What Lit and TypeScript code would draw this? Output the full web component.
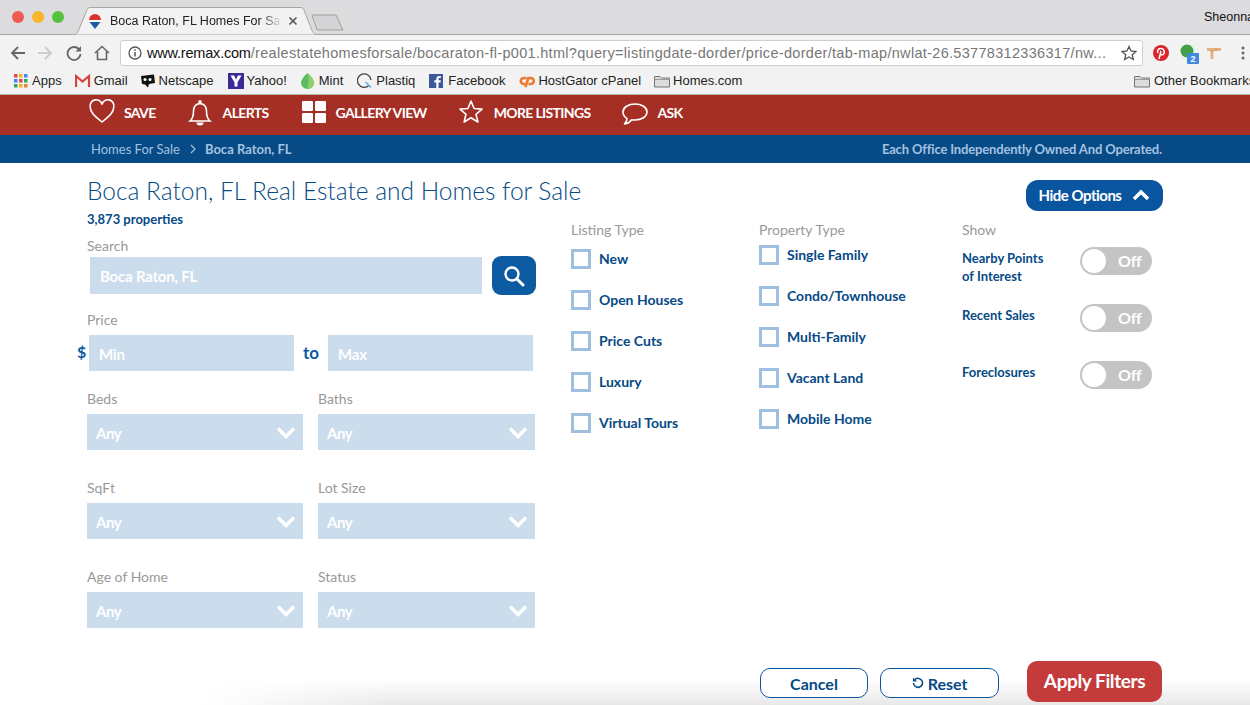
import { LitElement, css, html, svg } from 'lit';
import { customElement } from 'lit/decorators.js';

const bookmarkIcons = {
  apps: svg`<g>${[0, 5, 10].flatMap((y, r) => [0, 5, 10].map((x, c) => svg`<rect x=${x + 1} y=${y + 1} width="3.500" height="3.500" fill=${[['#e04a3f', '#f0b429', '#4285f4'], ['#4285f4', '#e04a3f', '#34a853'], ['#34a853', '#f0b429', '#e8862a']][r][c]}></rect>`))}</g>`,
  gmail: svg`<path d="M1 14V3l6.500 5.500L14 3v11" fill="none" stroke="#d5453b" stroke-width="2.200"></path>`,
  aol: svg`<path d="M1 3l13-1.500L15 10l-6 1-1 3.500L5 11.500 2 11z" fill="#111"></path><circle cx="5" cy="6.500" r="1.500" fill="#fff"></circle><circle cx="10" cy="6.500" r="1.500" fill="#fff"></circle>`,
  yahoo: svg`<rect width="16" height="16" fill="#3b2a96"></rect><path d="M2.500 2.500h3.600L8 6.500 9.900 2.500h3.600L9.500 9.500v4H6.500v-4z" fill="#fff"></path>`,
  mint: svg`<path d="M7.500 0C11.500 3.500 14 7 14 10a6.500 6 0 0 1-13 0C1 7 3.500 3.500 7.500 0z" fill="#5dbb63"></path><path d="M7.500 0C9 5 9 10 7.500 16 12.500 15.500 14 12.500 14 10 14 7 11.500 3.500 7.500 0z" fill="#8fd06a"></path>`,
  plastiq: svg`<path d="M12 12.500A6.800 6.800 0 1 1 14 7" fill="none" stroke="#444" stroke-width="1.300"></path><path d="M8.500 9l5.500 5.500" stroke="#55b7e0" stroke-width="1.600"></path>`,
  facebook: svg`<rect width="14" height="14" y="1" fill="#3b5998"></rect><path d="M9.500 15V9.500h2l.300-2.200H9.500V6c0-.700.200-1.100 1.100-1.100h1.200V3c-.300 0-.900-.100-1.700-.100-1.700 0-2.800 1-2.800 2.900v1.500H5.300v2.200h2V15z" fill="#fff"></path>`,
  cpanel: svg`<path d="M7.500 5H4.800a3 3 0 0 0 0 6H6" fill="none" stroke="#ee7a30" stroke-width="2.600"></path><path d="M6.500 14l2.800-9h2.500a3 3 0 0 1 0 6H9.500" fill="none" stroke="#ee7a30" stroke-width="2.600"></path>`,
  folder: svg`<path d="M.500 3.500h5.500l1.500 1.500h8v9h-15z" fill="#dcdcdc" stroke="#777"></path><path d="M.500 6.500h15" stroke="#999"></path>`,
};

const bookmarks = [
  { icon: 'apps', label: 'Apps', gap: 0 },
  { icon: 'gmail', label: 'Gmail', gap: 13 },
  { icon: 'aol', label: 'Netscape', gap: 12 },
  { icon: 'yahoo', label: 'Yahoo!', gap: 14 },
  { icon: 'mint', label: 'Mint', gap: 13 },
  { icon: 'plastiq', label: 'Plastiq', gap: 14 },
  { icon: 'facebook', label: 'Facebook', gap: 14 },
  { icon: 'cpanel', label: 'HostGator cPanel', gap: 14 },
  { icon: 'folder', label: 'Homes.com', gap: 13 },
] as const;

const navItems = [
  {
    label: 'SAVE', textGap: 9, after: 32, icon: svg`<path d="M13 22C5 15.500 1.200 12 1.200 7A5.800 5.800 0 0 1 13 4.500 5.800 5.800 0 0 1 24.800 7C24.800 12 21 15.500 13 22z" fill="none" stroke="#fff" stroke-width="1.600"></path>`,
  },
  {
    label: 'ALERTS', textGap: 9, after: 32, icon: svg`<path d="M2 21c2.500-2 3.500-4.500 3.500-10 0-4.500 2.500-7 6.500-7.500 4 .5 6.500 3 6.500 7.500 0 5.500 1 8 3.500 10z" fill="none" stroke="#fff" stroke-width="1.600"></path><circle cx="12" cy="1.800" r="1.800" fill="#fff"></circle><path d="M8.500 22.500a3.500 3 0 0 0 7 0z" fill="#fff"></path>`,
  },
  {
    label: 'GALLERY VIEW', textGap: 9, after: 31, icon: svg`<rect x="1" y="1" width="11" height="10" rx="1" fill="#fff"></rect><rect x="14" y="1" width="11" height="10" rx="1" fill="#fff"></rect><rect x="1" y="13" width="11" height="10" rx="1" fill="#fff"></rect><rect x="14" y="13" width="11" height="10" rx="1" fill="#fff"></rect>`,
  },
  {
    label: 'MORE LISTINGS', textGap: 10, after: 31, icon: svg`<path d="M13 1l3.100 7.500 7.900.600-6 5.200 1.900 7.700L13 17.800 6.100 22 8 14.300l-6-5.200 7.900-.600z" fill="none" stroke="#fff" stroke-width="1.600" stroke-linejoin="round"></path>`,
  },
  {
    label: 'ASK', textGap: 10, after: 0, icon: svg`<path d="M13 4c6.600 0 12 3.400 12 8s-5.400 8-12 8c-1.200 0-2.300-.100-3.400-.300C8 22 6 23.500 2.500 24c1.500-1.500 2.400-3 2.500-5.400C2.500 17 1 14.700 1 12c0-4.600 5.400-8 12-8z" fill="none" stroke="#fff" stroke-width="1.600" stroke-linejoin="round"></path>`,
  },
];

const selects = ['Beds', 'Baths', 'SqFt', 'Lot Size', 'Age of Home', 'Status'];
const listingTypes = ['New', 'Open Houses', 'Price Cuts', 'Luxury', 'Virtual Tours'];
const propertyTypes = ['Single Family', 'Condo/Townhouse', 'Multi-Family', 'Vacant Land', 'Mobile Home'];

@customElement('app-root')
export class AppRoot extends LitElement {
  static styles = css`
    :host {
      display: block;
      position: relative;
      width: 1250px;
      height: 705px;
      overflow: hidden;
      background: #fff;
      font-family: Lato, 'Liberation Sans', sans-serif;
    }
    svg { display: block; flex: none; }

    .tabstrip {
      display: flex;
      align-items: flex-start;
      height: 23px;
      padding: 11px 0 0 12px;
      background: #dcdbdd;
      border-bottom: 1px solid #a6a6a6;
      font-family: 'Liberation Sans', sans-serif;
    }
    .light { width: 12px; height: 12px; border-radius: 50%; margin-right: 8px; }
    .tab {
      position: relative;
      width: 244px;
      height: 28px;
      margin: -4px 0 0 0;
      flex: none;
      display: flex;
      align-items: center;
      padding-left: 16px;
      box-sizing: border-box;
    }
    .tab-shape { position: absolute; left: 0; top: 0; }
    .tab > :not(.tab-shape) { position: relative; }
    .tab-title {
      width: 172px;
      margin-left: 8px;
      font-size: 12.5px;
      white-space: nowrap;
      overflow: hidden;
      color: #222;
      -webkit-mask-image: linear-gradient(90deg, #000 88%, transparent);
      mask-image: linear-gradient(90deg, #000 88%, transparent);
    }
    .tab-x { margin: 0 0 0 6px; }
    .new-tab { margin: 3px 0 0 -5px; }
    .user { margin-left: auto; margin-top: -1px; font-size: 12.5px; color: #111; white-space: nowrap; width: 46px; overflow: hidden; }

    .toolbar {
      display: flex;
      align-items: center;
      height: 31px;
      box-sizing: border-box;
      padding: 4px 0 0 10px;
      background: #f2f2f2;
      font-family: 'Liberation Sans', sans-serif;
    }
    .tool { margin-right: 11px; }
    .omnibox {
      display: flex;
      align-items: center;
      width: 1023px;
      height: 26px;
      box-sizing: border-box;
      margin: 1px 0 0 0;
      background: #fff;
      border: 1px solid #cfcfcf;
      border-radius: 3px;
      padding-left: 7px;
      font-size: 14.5px;
      white-space: nowrap;
    }
    .url { margin-left: 5px; color: #777; width: 975px; overflow: hidden; letter-spacing: 0.31px; }
    .url b { font-weight: 400; color: #111; letter-spacing: -0.2px; }
    .exts { display: flex; align-items: center; margin-left: 9px; gap: 8px; }

    .bookmarks {
      display: flex;
      align-items: center;
      height: 29px;
      padding: 2px 0 1px 13px;
      box-sizing: border-box;
      background: #f2f2f2;
      border-bottom: 1px solid #b4b8a8;
      font-family: 'Liberation Sans', sans-serif;
      font-size: 13px;
      color: #222;
    }
    .bookmark { display: flex; align-items: center; white-space: nowrap; }
    .bookmark svg { width: 16px; height: 16px; margin-right: 3px; }
    .other { margin-left: auto; width: 116px; overflow: hidden; }
    .other svg { margin-right: 4px; }

    .nav {
      display: flex;
      align-items: center;
      height: 40px;
      box-sizing: border-box;
      padding: 0 0 7px 89px;
      background: #a52e25;
      color: #fff;
      font-weight: 700;
      font-size: 14px;
      letter-spacing: -0.65px;
    }
    .nav-item { display: flex; align-items: center; }
    .nav-item svg { width: 26px; height: 24px; overflow: visible; }
    .nav-item span { padding-top: 2px; }

    .crumbs {
      display: flex;
      align-items: center;
      height: 28px;
      padding: 0 88px 0 91px;
      background: #064a86;
      color: #a4c2e0;
      font-size: 13px;
    }
    .crumbs svg { margin: 0 9px 0 10px; }
    .crumbs b { font-weight: 700; }
    .crumbs .tagline { margin-left: auto; font-weight: 700; letter-spacing: -0.15px; }

    .page { padding: 0 87px; }
    .head { display: flex; justify-content: space-between; align-items: flex-start; padding-top: 12px; }
    h1 { margin: 0; font-weight: 300; font-size: 24.5px; line-height: 32px; color: #064a86; white-space: nowrap; }
    .count { margin: 4px 0 0; line-height: 16px; font-size: 13px; font-weight: 700; color: #064a86; }
    .hide {
      display: flex;
      align-items: center;
      justify-content: center;
      gap: 11px;
      width: 137px;
      height: 31px;
      box-sizing: border-box;
      padding-bottom: 1px;
      margin-top: 5px;
      border-radius: 12px;
      background: #0a559f;
      color: #fff;
      font-weight: 700;
      font-size: 15px;
      letter-spacing: -0.5px;
    }

    .filters { display: flex; align-items: flex-start; }
    .label { height: 18px; line-height: 18px; font-size: 14px; color: #999; white-space: nowrap; }
    .basic { width: 449px; flex: none; padding-top: 10px; }
    .field {
      display: flex;
      align-items: center;
      box-sizing: border-box;
      background: #cbdcec;
      color: #fff;
      font-weight: 700;
      font-size: 15px;
      letter-spacing: -0.2px;
    }
    .search-row { display: flex; align-items: center; height: 39px; margin-top: 1px; }
    .search-input { width: 392px; height: 37px; margin-left: 3px; padding-left: 10px; }
    .search-btn {
      display: flex;
      align-items: center;
      justify-content: center;
      width: 44px;
      height: 39px;
      margin-left: 10px;
      border-radius: 9px;
      background: #0b5aa2;
    }
    .price-label { margin-top: 16px; }
    .price-row { display: flex; align-items: center; height: 36px; margin: 6px 0 0 -10px; color: #0b5aa2; font-weight: 700; }
    .dollar { width: 12px; font-size: 16px; margin-bottom: 3px; }
    .price-input { width: 205px; height: 36px; padding: 2px 0 0 10px; }
    .to { width: 34px; text-align: center; font-size: 17px; margin-bottom: 2px; }
    .select-grid { display: grid; grid-template-columns: 216px 217px; column-gap: 15px; row-gap: 29px; margin-top: 19px; }
    .select { height: 36px; margin-top: 6px; padding: 2px 5px 0 9px; justify-content: space-between; letter-spacing: -0.5px; }

    .checks { margin-top: -6px; flex: none; }
    .listing { margin-left: 35px; width: 188px; }
    .property { width: 203px; }
    .check-list { display: flex; flex-direction: column; gap: 21px; }
    .listing .check-list { margin-top: 10px; }
    .property .check-list { margin-top: 6px; }
    .check { display: flex; align-items: center; height: 20px; font-weight: 700; font-size: 14px; color: #064a86; white-space: nowrap; }
    .check span { margin-bottom: 2px; }
    .box { width: 20px; height: 20px; box-sizing: border-box; border: 3px solid #9ebfe0; margin-right: 8px; background: #fff; }

    .show { margin-top: -6px; width: 190px; }
    .toggles { display: flex; flex-direction: column; gap: 29px; margin-top: 8px; }
    .toggle-row { display: flex; justify-content: space-between; align-items: flex-start; height: 28px; }
    .toggle-label { padding-top: 2px; font-size: 13px; line-height: 18px; font-weight: 700; color: #064a86; }
    .toggle { display: flex; align-items: center; width: 72px; height: 28px; padding: 2px 2px 3px; box-sizing: border-box; border-radius: 14px; background: #c4c4c4; color: #fff; font-weight: 700; font-size: 16px; }
    .knob { width: 24px; height: 24px; border-radius: 50%; background: #fff; margin: 1px 12px 0 0; }

    .footer { display: flex; align-items: flex-start; justify-content: flex-end; margin: 33px 1px 0 0; position: relative; z-index: 1; }
    .btn {
      display: flex;
      align-items: center;
      justify-content: center;
      box-sizing: border-box;
      height: 30px;
      margin-top: 7px;
      background: #fff;
      border: 1px solid #0a559f;
      border-radius: 10px;
      color: #064a86;
      font-weight: 700;
      font-size: 16px;
    }
    .cancel { width: 108px; margin-right: 12px; }
    .reset { width: 119px; margin-right: 28px; gap: 4px; }
    .apply {
      display: flex;
      align-items: center;
      justify-content: center;
      width: 135px;
      height: 41px;
      box-sizing: border-box;
      padding-bottom: 2px;
      border-radius: 10px;
      background: #c33b3b;
      color: #fff;
      font-weight: 700;
      font-size: 19px;
      letter-spacing: -0.4px;
    }
    /* soft shadow of the results panel peeking up at the bottom edge */
    .shade {
      position: absolute;
      left: 200px;
      right: 0;
      bottom: 0;
      height: 26px;
      background: linear-gradient(180deg, rgba(0, 0, 0, 0), rgba(0, 0, 0, 0.09));
      -webkit-mask-image: linear-gradient(90deg, transparent, #000 200px);
      mask-image: linear-gradient(90deg, transparent, #000 200px);
    }
  `;

  private chevron() {
    return html`<svg width="24" height="16" viewBox="0 0 24 16"><path d="M4 3.500l8 8 8-8" fill="none" stroke="#fff" stroke-width="3.600"></path></svg>`;
  }

  render() {
    return html`
      <div class="tabstrip">
        <div class="light" style="background:#f05a50"></div>
        <div class="light" style="background:#f8b62d"></div>
        <div class="light" style="background:#56c13c"></div>
        <div class="tab">
          <svg class="tab-shape" width="244" height="28" viewBox="0 0 244 28"><path d="M0 27.500h2c2 0 3-1 4-3L15 3c.6-1.500 1.500-2.500 3-2.500h211c1.500 0 2.400 1 3 2.500l7 18c1 3 3 6.500 5 6.500" fill="#f2f2f2" stroke="#a6a6a6"></path></svg>
          <svg width="14" height="16" viewBox="0 0 14 16"><path d="M1 7a6 6 0 0 1 12 0z" fill="#d8342e"></path><path d="M1 7h12v2H1z" fill="#fff"></path><path d="M1.500 9h11L7 16z" fill="#1c5aa6"></path></svg>
          <div class="tab-title">Boca Raton, FL Homes For Sal</div>
          <svg class="tab-x" width="10" height="10" viewBox="0 0 10 10"><path d="M1.500 1.500l7 7m0-7l-7 7" stroke="#555" stroke-width="1.600"></path></svg>
        </div>
        <svg class="new-tab" width="34" height="17" viewBox="0 0 34 17"><path d="M1 1h24l7 15H6z" fill="#d4d3d5" stroke="#a0a0a0"></path></svg>
        <div class="user">Sheonna</div>
      </div>

      <div class="toolbar">
        <svg class="tool" width="16" height="16" viewBox="0 0 16 16"><path d="M15 8H2.500M8 2L2 8l6 6" fill="none" stroke="#666" stroke-width="1.800"></path></svg>
        <svg class="tool" width="16" height="16" viewBox="0 0 16 16" style="margin-right:13px"><path d="M1 8h12.500M8 2l6 6-6 6" fill="none" stroke="#ccc" stroke-width="1.800"></path></svg>
        <svg class="tool" width="16" height="16" viewBox="0 0 16 16" style="margin-right:12px"><path d="M13.500 5A6.500 6.500 0 1 0 14.500 9" fill="none" stroke="#666" stroke-width="1.800"></path><path d="M15 1v5.500H9.500z" fill="#666"></path></svg>
        <svg class="tool" width="16" height="16" viewBox="0 0 16 16" style="margin-right:10px"><path d="M1 8l7-6.500L15 8M3.500 6.500V14.500h9V6.500" fill="none" stroke="#666" stroke-width="1.600"></path></svg>
        <div class="omnibox">
          <svg width="14" height="14" viewBox="0 0 14 14"><circle cx="7" cy="7" r="6" fill="none" stroke="#555" stroke-width="1.300"></circle><path d="M7 6v4.500M7 3.300v1.500" stroke="#555" stroke-width="1.500"></path></svg>
          <div class="url"><b>www.remax.com</b>/realestatehomesforsale/bocaraton-fl-p001.html?query=listingdate-dorder/price-dorder/tab-map/nwlat-26.53778312336317/nw...</div>
          <svg width="16" height="16" viewBox="0 0 16 16" style="margin-left:-1px"><path d="M8 1.500l2 4.500 4.900.5-3.700 3.200 1.100 4.800L8 12l-4.300 2.500 1.100-4.800L1.100 6.500 6 6z" fill="none" stroke="#555" stroke-width="1.300"></path></svg>
        </div>
        <div class="exts">
          <svg width="18" height="18" viewBox="0 0 18 18"><circle cx="9" cy="9" r="8" fill="#d9252b"></circle><path d="M7 15l2-8M6 9c-1.500-3 1-5 3.500-4.500 3 .5 3.500 3.500 2 5.500-1 1.300-3 1-3.500 0" fill="none" stroke="#fff" stroke-width="1.500"></path></svg>
          <svg width="20" height="22" viewBox="0 0 20 22" style="margin:5px 0 0 2px"><circle cx="7" cy="7" r="6.500" fill="#43a047"></circle><rect x="7" y="9" width="12" height="11" rx="1" fill="#3f8ae0"></rect><text x="13" y="18" font-size="9" font-weight="700" fill="#fff" text-anchor="middle" font-family="Liberation Sans">2</text></svg>
          <svg width="14" height="12" viewBox="0 0 14 12" style="margin-left:-1px"><path d="M0 1h14v3H6.500v8h-3V4H0z" fill="#e3b482"></path><path d="M9 1v3M3.500 4h3" stroke="#c98f55"></path></svg>
          <svg width="4" height="14" viewBox="0 0 4 14" style="margin-left:12px"><circle cx="2" cy="2" r="1.500" fill="#666"></circle><circle cx="2" cy="7" r="1.500" fill="#666"></circle><circle cx="2" cy="12" r="1.500" fill="#666"></circle></svg>
        </div>
      </div>

      <div class="bookmarks">
        ${bookmarks.map(b => html`
          <div class="bookmark" style="margin-left:${b.gap}px">
            <svg viewBox="0 0 16 16">${bookmarkIcons[b.icon]}</svg>${b.label}
          </div>`)}
        <div class="bookmark other"><svg viewBox="0 0 16 16">${bookmarkIcons.folder}</svg>Other Bookmarks</div>
      </div>

      <div class="nav">
        ${navItems.map(item => html`
          <div class="nav-item" style="margin-right:${item.after}px">
            <svg viewBox="0 0 26 24">${item.icon}</svg><span style="margin-left:${item.textGap}px">${item.label}</span>
          </div>`)}
      </div>

      <div class="crumbs">
        <span>Homes For Sale</span>
        <svg width="6" height="10" viewBox="0 0 6 10"><path d="M1 1l4 4-4 4" fill="none" stroke="#a4c2e0" stroke-width="1.200"></path></svg>
        <b>Boca Raton, FL</b>
        <span class="tagline">Each Office Independently Owned And Operated.</span>
      </div>

      <div class="page">
        <div class="head">
          <div>
            <h1>Boca Raton, FL Real Estate and Homes for Sale</h1>
            <div class="count">3,873 properties</div>
          </div>
          <div class="hide">Hide Options
            <svg width="18" height="12" viewBox="0 0 18 12"><path d="M2 10l7-7 7 7" fill="none" stroke="#fff" stroke-width="3.500"></path></svg>
          </div>
        </div>

        <div class="filters">
          <div class="basic">
            <div class="label">Search</div>
            <div class="search-row">
              <div class="field search-input">Boca Raton, FL</div>
              <div class="search-btn">
                <svg width="22" height="22" viewBox="0 0 22 22"><circle cx="9" cy="9" r="6.500" fill="none" stroke="#fff" stroke-width="2.400"></circle><path d="M14 14l6 6" stroke="#fff" stroke-width="3" stroke-linecap="round"></path></svg>
              </div>
            </div>
            <div class="label price-label">Price</div>
            <div class="price-row">
              <span class="dollar">$</span>
              <div class="field price-input">Min</div>
              <span class="to">to</span>
              <div class="field price-input">Max</div>
            </div>
            <div class="select-grid">
              ${selects.map(name => html`
                <div>
                  <div class="label">${name}</div>
                  <div class="field select">Any ${this.chevron()}</div>
                </div>`)}
            </div>
          </div>

          <div class="checks listing">
            <div class="label">Listing Type</div>
            <div class="check-list">
              ${listingTypes.map(t => html`<div class="check"><div class="box"></div><span>${t}</span></div>`)}
            </div>
          </div>

          <div class="checks property">
            <div class="label">Property Type</div>
            <div class="check-list">
              ${propertyTypes.map(t => html`<div class="check"><div class="box"></div><span>${t}</span></div>`)}
            </div>
          </div>

          <div class="show">
            <div class="label">Show</div>
            <div class="toggles">
              <div class="toggle-row"><div class="toggle-label">Nearby Points<br />of Interest</div><div class="toggle"><div class="knob"></div>Off</div></div>
              <div class="toggle-row"><div class="toggle-label">Recent Sales</div><div class="toggle"><div class="knob"></div>Off</div></div>
              <div class="toggle-row"><div class="toggle-label">Foreclosures</div><div class="toggle"><div class="knob"></div>Off</div></div>
            </div>
          </div>
        </div>

        <div class="footer">
          <div class="btn cancel">Cancel</div>
          <div class="btn reset">
            <svg width="12" height="12" viewBox="0 0 12 12"><path d="M3 2.500A4.500 4.500 0 1 1 1.500 6" fill="none" stroke="#064a86" stroke-width="1.500"></path><path d="M1 .5v4h4z" fill="#064a86"></path></svg>
            Reset
          </div>
          <div class="apply">Apply Filters</div>
        </div>
      </div>
      <div class="shade"></div>
    `;
  }
}

declare global {
  interface HTMLElementTagNameMap {
    'app-root': AppRoot;
  }
}
